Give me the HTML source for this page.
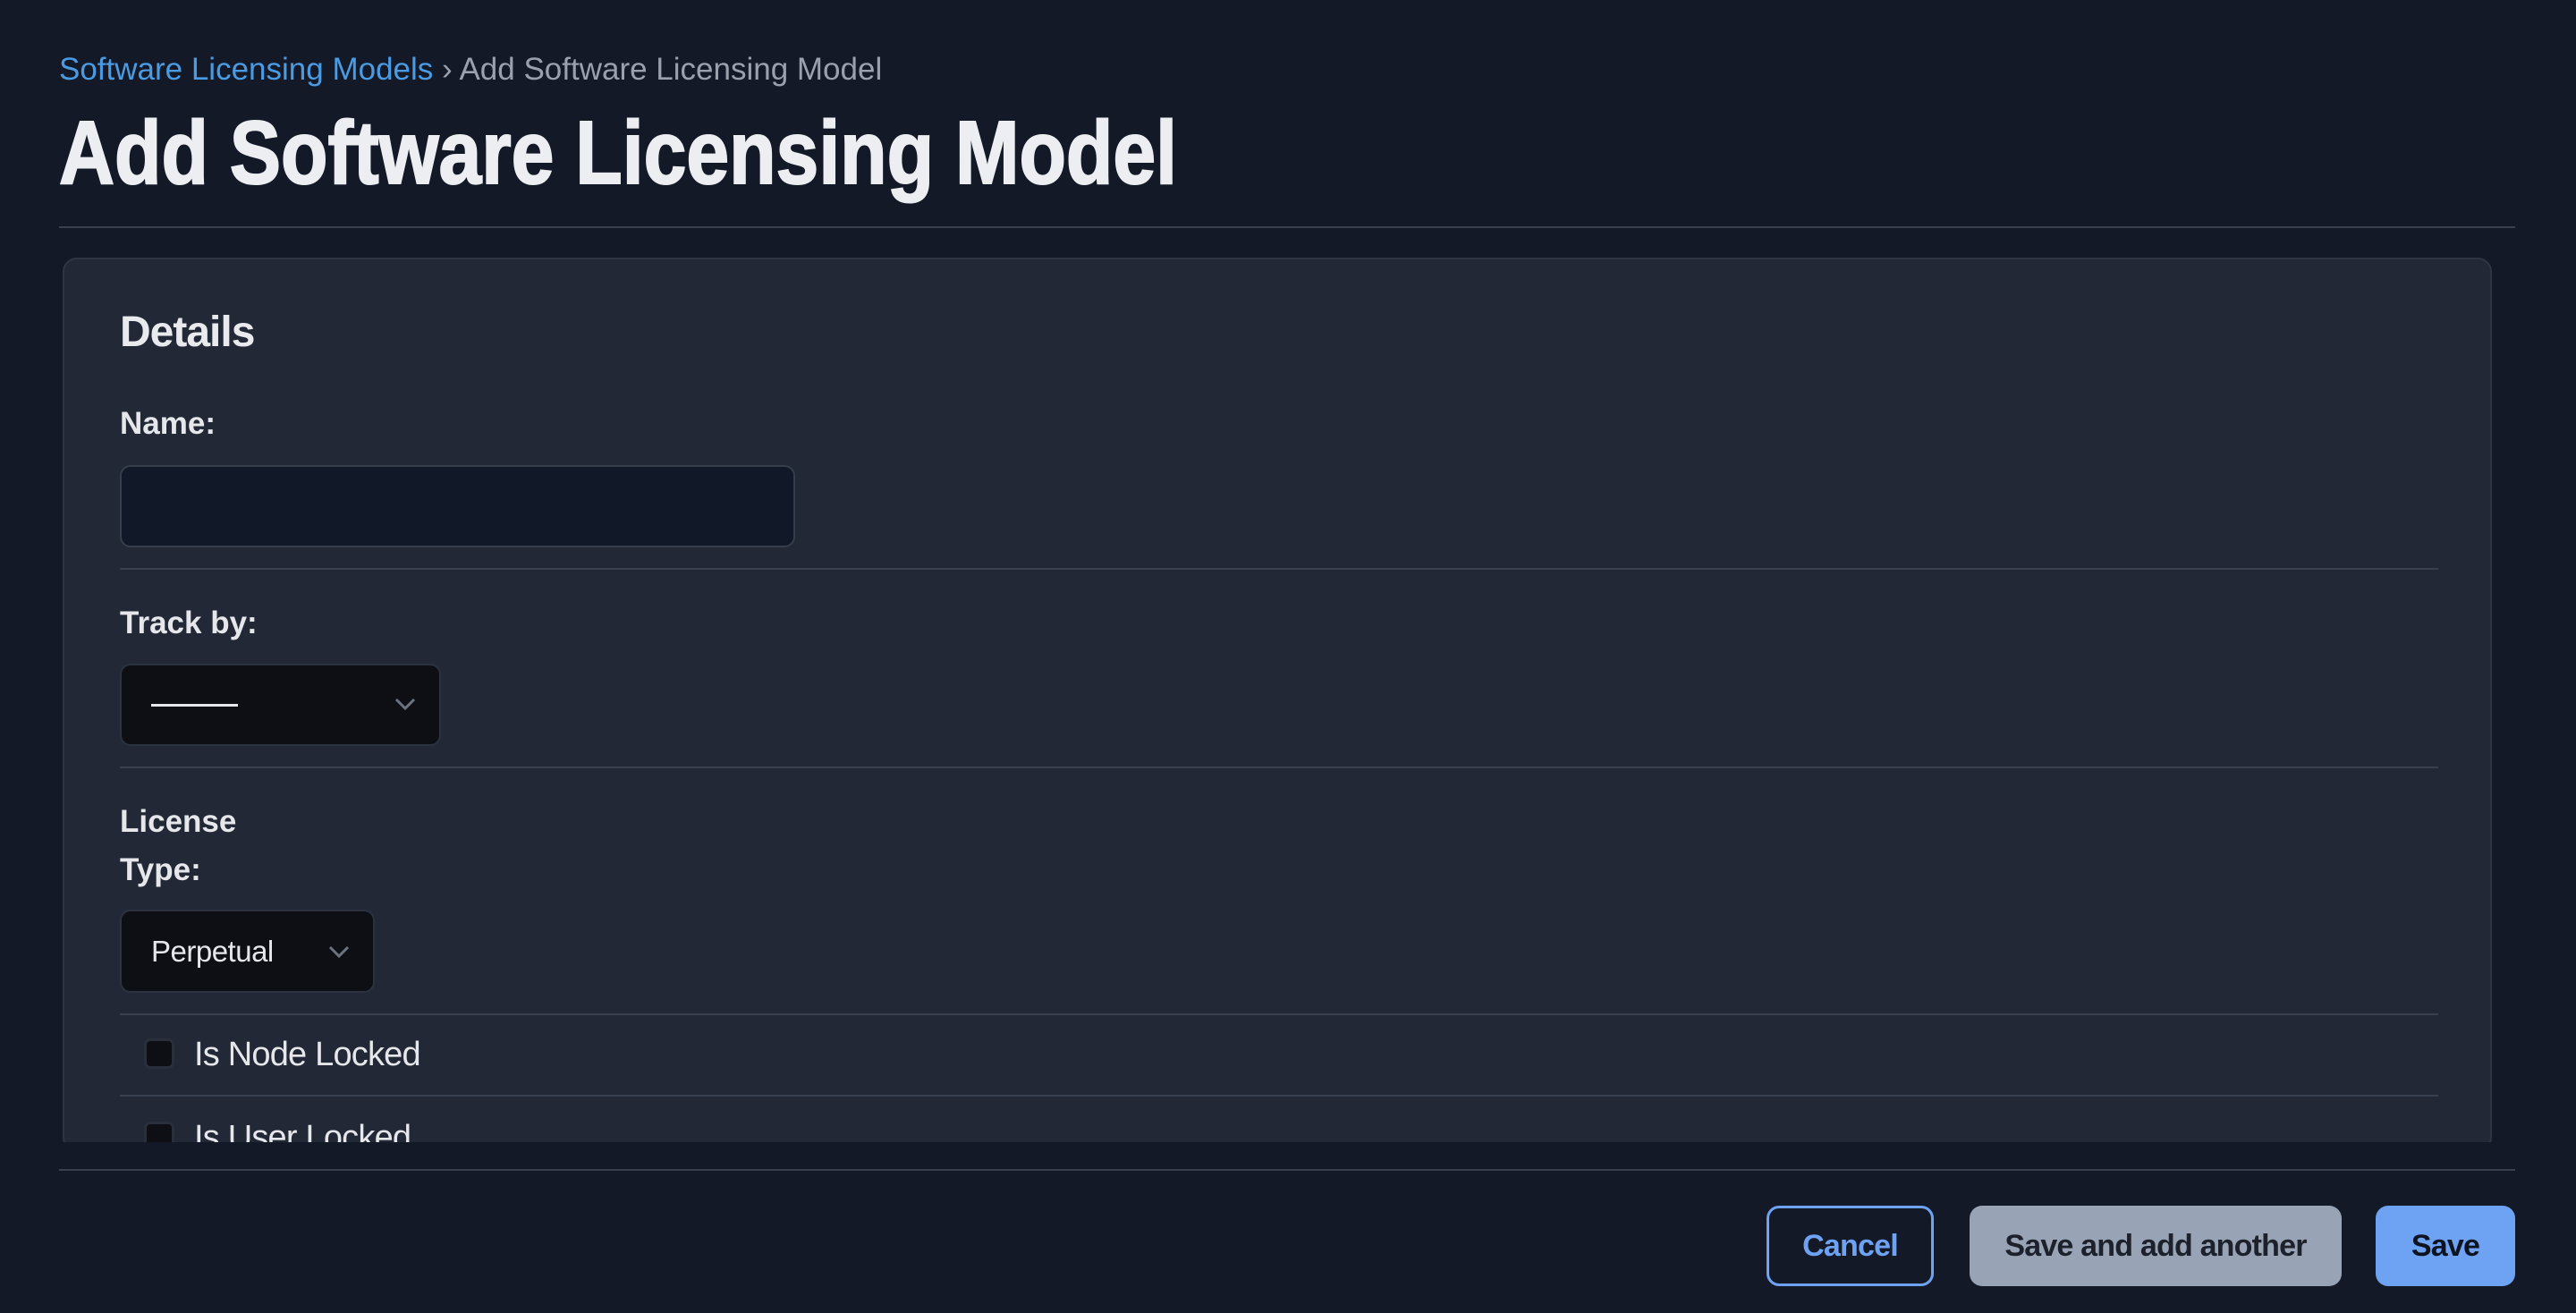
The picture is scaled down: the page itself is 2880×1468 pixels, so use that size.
<!DOCTYPE html>
<html><head><meta charset="utf-8"><style>
*{margin:0;padding:0;box-sizing:border-box}
body{width:2880px;height:1468px;background:#131926;font-family:"Liberation Sans",sans-serif;position:relative;overflow:hidden;color:#e5e7eb}
.a{position:absolute;white-space:nowrap}
.line{position:absolute;height:2px;background:#394150}
.lbl{position:absolute;font-size:35px;font-weight:bold;color:#e5e7eb;letter-spacing:0}
.sel{position:absolute;background:#0d0f15;border:2px solid #2c3340;border-radius:12px}
.cb{position:absolute;width:34px;height:34px;background:#0d0f15;border:3px solid #2a303b;border-radius:7px}
.btn{position:absolute;border-radius:14px;font-size:34px;font-weight:bold;display:flex;align-items:center;justify-content:center;letter-spacing:-0.8px}
</style></head><body>
<div class="a" style="left:66px;top:58px;font-size:35px"><span style="color:#4b9be3">Software Licensing Models</span><span style="color:#9aa1ad"> › Add Software Licensing Model</span></div>
<svg class="a" style="left:60px;top:110px" width="1280" height="120"><text x="6" y="95" font-family="Liberation Sans, sans-serif" font-weight="bold" font-size="100" fill="#eceef1" stroke="#eceef1" stroke-width="2" textLength="1250" lengthAdjust="spacingAndGlyphs">Add Software Licensing Model</text></svg>
<div class="line" style="left:66px;top:253px;width:2746px"></div>
<div class="a" style="left:70px;top:288px;width:2716px;height:1000px;background:#222836;border:2px solid #2f3543;border-radius:16px"></div>
<div class="a" style="left:134px;top:344px;font-size:48px;font-weight:bold;color:#e8eaee;letter-spacing:-1px">Details</div>
<div class="lbl" style="left:134px;top:454px">Name:</div>
<div class="a" style="left:134px;top:520px;width:755px;height:92px;background:#111827;border:2px solid #363d4b;border-radius:12px"></div>
<div class="line" style="left:134px;top:635px;width:2592px"></div>
<div class="lbl" style="left:134px;top:677px">Track by:</div>
<div class="sel" style="left:134px;top:742px;width:359px;height:92px"></div>
<div class="a" style="left:169px;top:787px;width:97px;height:3px;background:#e5e7eb"></div>
<svg class="a" style="left:440px;top:778px" width="26" height="18"><path d="M3 4 L13 14 L23 4" stroke="#6b7280" stroke-width="3" fill="none"/></svg>
<div class="line" style="left:134px;top:857px;width:2592px"></div>
<div class="lbl" style="left:134px;top:899px">License</div>
<div class="lbl" style="left:134px;top:953px">Type:</div>
<div class="sel" style="left:134px;top:1017px;width:285px;height:93px"></div>
<div class="a" style="left:169px;top:1045px;font-size:33px;color:#e5e7eb;letter-spacing:-0.5px">Perpetual</div>
<svg class="a" style="left:366px;top:1055px" width="26" height="18"><path d="M3 4 L13 14 L23 4" stroke="#6b7280" stroke-width="3" fill="none"/></svg>
<div class="line" style="left:134px;top:1133px;width:2592px"></div>
<div class="cb" style="left:161px;top:1161px"></div>
<div class="a" style="left:217px;top:1158px;font-size:38px;color:#e5e7eb;letter-spacing:-0.8px">Is Node Locked</div>
<div class="line" style="left:134px;top:1224px;width:2592px"></div>
<div class="cb" style="left:161px;top:1254px"></div>
<div class="a" style="left:217px;top:1251px;font-size:38px;color:#e5e7eb;letter-spacing:-0.8px">Is User Locked</div>
<div class="a" style="left:0;top:1277px;width:2880px;height:191px;background:#131926"></div>
<div class="line" style="left:66px;top:1307px;width:2746px"></div>
<div class="btn" style="left:1975px;top:1348px;width:187px;height:90px;border:3px solid #6ea2f2;color:#6ea2f2">Cancel</div>
<div class="btn" style="left:2202px;top:1348px;width:416px;height:90px;background:#98a3b5;color:#1c212c">Save and add another</div>
<div class="btn" style="left:2656px;top:1348px;width:156px;height:90px;background:#6ea2f2;color:#0e1320">Save</div>
</body></html>
